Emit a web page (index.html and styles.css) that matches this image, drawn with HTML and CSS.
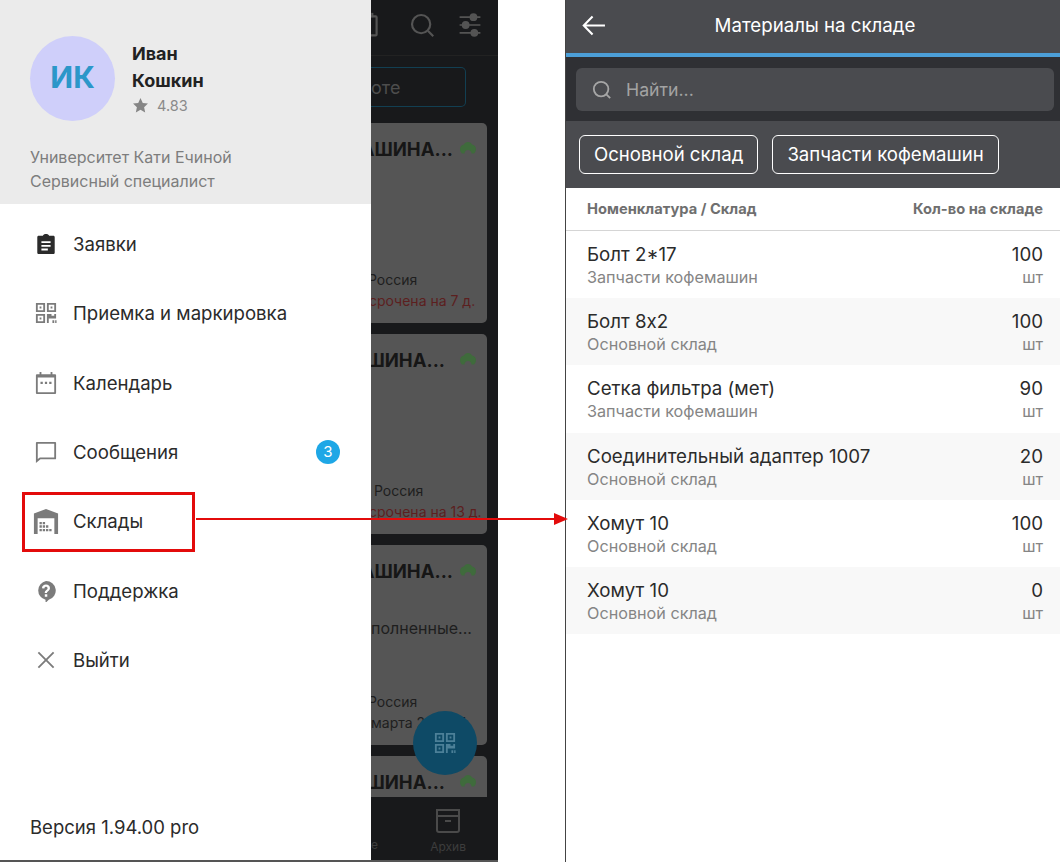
FILE: index.html
```html
<!DOCTYPE html>
<html lang="en">
<head>
    <meta charset="UTF-8">
    <title>Склады</title>
    <link rel="stylesheet" href="styles.css">
</head>
<body>
    <!-- Left phone: side menu over the orders list -->
    <div class="phone phone-menu">
        <div class="drawer">
            <div class="profile">
                <div class="profile-top">
                    <div class="avatar">ИК</div>
                    <div class="profile-info">
                        <div class="profile-name">Иван</div>
                        <div class="profile-name">Кошкин</div>
                        <div class="rating">
                            <svg class="star" viewBox="0 0 24 24"><path d="M12 1.500l3.200 7 7.300.8-5.400 5 1.500 7.500L12 18l-6.600 3.800 1.500-7.500-5.400-5 7.300-.8z"/></svg>
                            <span>4.83</span>
                        </div>
                    </div>
                </div>
                <div class="profile-org">Университет Кати Ечиной</div>
                <div class="profile-org">Сервисный специалист</div>
            </div>

            <div class="menu">
                <div class="menu-item">
                    <svg class="menu-icon dark" viewBox="0 0 24 24"><path fill-rule="evenodd" d="M4 3h4.600C9 1.700 10.300 1 12 1s3 .7 3.400 2H20c.8 0 1.500.7 1.500 1.500v17c0 .8-.7 1.500-1.500 1.500H4c-.8 0-1.500-.7-1.500-1.500v-17C2.500 3.700 3.200 3 4 3zm3 6v2h10V9zm0 4v2h10v-2zm0 4v2h7v-2z"/></svg>
                    <span>Заявки</span>
                </div>
                <div class="menu-item">
                    <svg class="menu-icon" viewBox="0 0 24 24"><path fill-rule="evenodd" d="M1 1h10v10H1zm2 2v6h6V3zm2 2h2v2H5zM13 1h10v10H13zm2 2v6h6V3zm2 2h2v2h-2zM1 13h10v10H1zm2 2v6h6v-6zm2 2h2v2H5zM13 13h5v2h3v-2h2v5h-8v5h-2zM19 20h2v3h-2zM22 20h1.500v3H22z"/></svg>
                    <span>Приемка и маркировка</span>
                </div>
                <div class="menu-item">
                    <svg class="menu-icon" viewBox="0 0 24 24"><path fill-rule="evenodd" d="M5 0h2v2.500h10V0h2v2.500h3c.6 0 1 .4 1 1V23c0 .6-.4 1-1 1H2c-.6 0-1-.4-1-1V3.500c0-.6.4-1 1-1h3zM3 6v16h18V6zm3 4.500h2.500V13H6zm4.800 0h2.400V13h-2.400zm4.700 0H18V13h-2.500z"/></svg>
                    <span>Календарь</span>
                </div>
                <div class="menu-item">
                    <svg class="menu-icon" viewBox="0 0 24 24"><path fill-rule="evenodd" d="M2 1h20c.6 0 1 .4 1 1v17c0 .6-.4 1-1 1H6l-5 4V2c0-.6.4-1 1-1zm1 2v16.500L5.300 18H21V3z"/></svg>
                    <span>Сообщения</span>
                    <span class="badge">3</span>
                </div>
                <div class="menu-item">
                    <svg class="menu-icon wide" viewBox="0 0 28 28"><path fill-rule="evenodd" d="M14 1l13 5v22h-4V11H5v17H1V6z"/><path d="M7 15h2.500v2.500H7zM10.500 15H13v2.500h-2.500zM7 18.700h2.500v2.500H7zM10.500 18.700H13v2.500h-2.500zM14 18.700h2.500v2.500H14zM7 22.500h2.500V25H7zM10.500 22.500H13V25h-2.500zM14 22.500h2.500V25H14zM17.500 22.500H20V25h-2.500z"/></svg>
                    <span>Склады</span>
                </div>
                <div class="menu-item">
                    <svg class="menu-icon" viewBox="0 0 24 24"><path fill-rule="evenodd" d="M12 1a10.500 10.500 0 0 1 3 20.600L11.500 25v-3.500A10.500 10.500 0 0 1 12 1zm-1.300 14.500v2.700h2.700v-2.700zM12 5c-2.400 0-4.200 1.500-4.400 3.900l2.600.3c.1-1.100.8-1.800 1.800-1.800s1.700.6 1.700 1.500c0 .8-.4 1.200-1.300 1.900-1.300 1-1.800 1.800-1.800 3.400h2.500c0-1 .3-1.300 1.200-2 1.300-1 2-1.900 2-3.400C16.300 6.400 14.500 5 12 5z"/></svg>
                    <span>Поддержка</span>
                </div>
                <div class="menu-item">
                    <svg class="menu-icon" viewBox="0 0 24 24"><path d="M4.400 3L12 10.600 19.600 3 21 4.400 13.400 12l7.600 7.600-1.400 1.400-7.600-7.600L4.400 21 3 19.600l7.600-7.600L3 4.400z"/></svg>
                    <span>Выйти</span>
                </div>
            </div>

            <div class="version">Версия 1.94.00 pro</div>
        </div>

        <!-- Dimmed screen behind the menu -->
        <div class="behind">
            <div class="behind-top">
                <svg class="behind-icon" viewBox="0 0 30 30" fill="none" stroke="#545454" stroke-width="2.500"><rect x="-8" y="5" width="26" height="22" rx="1"/><path d="M13 1v5"/><path d="M3 15h2.500M9 15h2.500" stroke-width="2.200"/></svg>
                <svg class="behind-icon" viewBox="0 0 30 30" fill="none" stroke="#545454" stroke-width="2.500"><circle cx="14" cy="14" r="10.500"/><path d="M22 22l6 6"/></svg>
                <svg class="behind-icon" viewBox="0 0 30 30" fill="none" stroke="#545454" stroke-width="2"><path d="M3 6h24M3 15h24M3 24h24"/><circle cx="19" cy="6" r="3.500" fill="#545454"/><circle cx="10" cy="15" r="3.500" fill="#545454"/><circle cx="20" cy="24" r="3.500" fill="#545454"/></svg>
            </div>
            <div class="behind-filter"><div class="filter-box">оте</div></div>
            <div class="cards">
                <div class="card">
                    <div class="card-title"><span class="title-text">АШИНА...</span><svg class="cloud" viewBox="0 0 16 12"><path fill-rule="evenodd" d="M8 0c2 0 3.500 1 4 2.500 2 .2 4 1.700 4 4.500 0 2-1 3.500-2 4.500h-2.500C11.300 9.500 10 8 8 8s-3.300 1.500-3.500 3.500H2c-1-1-2-2.500-2-4.500 0-2.800 2-4.300 4-4.500C4.500 1 6 0 8 0z"/></svg></div>
                    <div class="card-place">Россия</div>
                    <div class="card-late">срочена на 7 д.</div>
                </div>
                <div class="card">
                    <div class="card-title"><span class="title-text short">ШИНА...</span><svg class="cloud" viewBox="0 0 16 12"><path fill-rule="evenodd" d="M8 0c2 0 3.500 1 4 2.500 2 .2 4 1.700 4 4.500 0 2-1 3.500-2 4.500h-2.500C11.300 9.500 10 8 8 8s-3.300 1.500-3.500 3.500H2c-1-1-2-2.500-2-4.500 0-2.800 2-4.300 4-4.500C4.500 1 6 0 8 0z"/></svg></div>
                    <div class="card-place shifted">Россия</div>
                    <div class="card-late">срочена на 13 д.</div>
                </div>
                <div class="card">
                    <div class="card-title"><span class="title-text">АШИНА...</span><svg class="cloud" viewBox="0 0 16 12"><path fill-rule="evenodd" d="M8 0c2 0 3.500 1 4 2.500 2 .2 4 1.700 4 4.500 0 2-1 3.500-2 4.500h-2.500C11.300 9.500 10 8 8 8s-3.300 1.500-3.500 3.500H2c-1-1-2-2.500-2-4.500 0-2.800 2-4.300 4-4.500C4.500 1 6 0 8 0z"/></svg></div>
                    <div class="card-note">полненные...</div>
                    <div class="card-place next">Россия</div>
                    <div class="card-date">марта 2021 17</div>
                </div>
                <div class="card card-cut">
                    <div class="card-title"><span class="title-text short">ШИНА...</span><svg class="cloud" viewBox="0 0 16 12"><path fill-rule="evenodd" d="M8 0c2 0 3.500 1 4 2.500 2 .2 4 1.700 4 4.500 0 2-1 3.500-2 4.500h-2.500C11.300 9.500 10 8 8 8s-3.300 1.500-3.500 3.500H2c-1-1-2-2.500-2-4.500 0-2.800 2-4.300 4-4.500C4.500 1 6 0 8 0z"/></svg></div>
                </div>
            </div>
            <div class="behind-tabs">
                <span class="tab-cut">е</span>
                <div class="tab">
                    <svg class="tab-icon" viewBox="0 0 26 26" fill="none" stroke="#4a4a4a" stroke-width="2"><path d="M2 2h22v20c0 1-1 2-2 2H4c-1 0-2-1-2-2zM2 8h22M10 13h6"/></svg>
                    <span>Архив</span>
                </div>
            </div>
            <div class="fab">
                <svg class="fab-icon" viewBox="0 0 24 24"><path fill-rule="evenodd" d="M1 1h10v10H1zm2 2v6h6V3zm2 2h2v2H5zM13 1h10v10H13zm2 2v6h6V3zm2 2h2v2h-2zM1 13h10v10H1zm2 2v6h6v-6zm2 2h2v2H5zM13 13h5v2h3v-2h2v5h-8v5h-2zM19 20h2v3h-2zM22 20h1.500v3H22z"/></svg>
            </div>
        </div>
    </div>

    <!-- Right phone: stock list -->
    <div class="phone phone-stock">
        <div class="stock-head">
            <svg class="back" viewBox="0 0 24 22" fill="none" stroke="#fff" stroke-width="2.200"><path d="M24 11H2M11 1.500L1.800 11l9.200 9.500"/></svg>
            <div class="stock-title">Материалы на складе</div>
        </div>
        <div class="search-wrap">
            <div class="search">
                <svg class="search-icon" viewBox="0 0 22 22" fill="none" stroke="#a6a6a6" stroke-width="2"><circle cx="10" cy="10" r="8"/><path d="M15.500 15.500l4.500 4.500"/></svg>
                <span>Найти...</span>
            </div>
        </div>
        <div class="chips">
            <div class="chip">Основной склад</div>
            <div class="chip">Запчасти кофемашин</div>
        </div>
        <div class="table-head">
            <span>Номенклатура / Склад</span>
            <span>Кол-во на складе</span>
        </div>
        <div class="row">
            <div><div class="row-name">Болт 2*17</div><div class="row-sub">Запчасти кофемашин</div></div>
            <div class="row-qty"><div class="row-name">100</div><div class="row-sub">шт</div></div>
        </div>
        <div class="row">
            <div><div class="row-name">Болт 8х2</div><div class="row-sub">Основной склад</div></div>
            <div class="row-qty"><div class="row-name">100</div><div class="row-sub">шт</div></div>
        </div>
        <div class="row">
            <div><div class="row-name">Сетка фильтра (мет)</div><div class="row-sub">Запчасти кофемашин</div></div>
            <div class="row-qty"><div class="row-name">90</div><div class="row-sub">шт</div></div>
        </div>
        <div class="row">
            <div><div class="row-name">Соединительный адаптер 1007</div><div class="row-sub">Основной склад</div></div>
            <div class="row-qty"><div class="row-name">20</div><div class="row-sub">шт</div></div>
        </div>
        <div class="row">
            <div><div class="row-name">Хомут 10</div><div class="row-sub">Основной склад</div></div>
            <div class="row-qty"><div class="row-name">100</div><div class="row-sub">шт</div></div>
        </div>
        <div class="row">
            <div><div class="row-name">Хомут 10</div><div class="row-sub">Основной склад</div></div>
            <div class="row-qty"><div class="row-name">0</div><div class="row-sub">шт</div></div>
        </div>
    </div>

    <!-- Red callout on top of both phones -->
    <div class="callout-box"></div>
    <svg class="callout-arrow" viewBox="0 0 372 12"><path d="M0 5h358v-5l14 6-14 6v-5H0z" fill="#e30b0b"/></svg>
</body>
</html>
```

FILE: styles.css
```css
body {
    margin: 0;
    width: 1060px;
    height: 862px;
    overflow: hidden;
    display: flex;
    justify-content: space-between;
    position: relative;
    background-color: white;
    font-family: Inter, "Open Sans", Arial, sans-serif;
    color: #2b2b2b;
}

.phone {
    height: 862px;
    box-sizing: border-box;
}

/* Left phone */
.phone-menu {
    width: 498px;
    display: flex;
    border-bottom: 2px solid #555;
}

.drawer {
    width: 371px;
    flex-shrink: 0;
    display: flex;
    flex-direction: column;
    background-color: white;
}

.profile {
    height: 204px;
    box-sizing: border-box;
    padding: 36px 30px 0;
    background-color: #ebebeb;
}
.profile-top {
    display: flex;
    gap: 17px;
    margin-bottom: 24px;
}
.avatar {
    width: 85px;
    height: 85px;
    border-radius: 50%;
    background-color: #cfcffa;
    color: #2c97c9;
    font-size: 30px;
    font-weight: 700;
    line-height: 83px;
    text-align: center;
}
.profile-info {
    padding-top: 4px;
}
.profile-name {
    font-size: 18px;
    font-weight: 700;
    line-height: 27px;
    color: #222;
}
.rating {
    display: flex;
    align-items: center;
    gap: 8px;
    font-size: 14.500px;
    line-height: 23px;
    color: #8a8a8a;
}
.star {
    width: 17px;
    height: 17px;
    fill: #858585;
}
.profile-org {
    font-size: 16px;
    line-height: 24px;
    color: #7d7d7d;
}

.menu {
    padding-top: 5.500px;
}
.menu-item {
    height: 69.330px;
    display: flex;
    align-items: center;
    padding: 0 31px 0 35px;
    font-size: 18.600px;
}
.menu-icon {
    width: 22px;
    height: 22px;
    margin-right: 16px;
    fill: #7b7b7b;
    flex-shrink: 0;
}
.menu-icon.dark {
    fill: #2b2b2b;
}
.menu-icon.wide {
    width: 26px;
    height: 28px;
    margin-left: -2px;
    margin-right: 14px;
}
.badge {
    margin-left: auto;
    width: 24px;
    height: 24px;
    border-radius: 50%;
    background-color: #1ea7e6;
    color: white;
    font-size: 15px;
    line-height: 24px;
    text-align: center;
}

.version {
    margin-top: auto;
    padding: 0 30px 21px;
    font-size: 18.500px;
    line-height: 24px;
}

/* Dimmed screen */
.behind {
    flex: 1;
    min-width: 0;
    position: relative;
    display: flex;
    flex-direction: column;
    overflow: hidden;
    background-color: #18191b;
    white-space: nowrap;
}
.behind-top {
    height: 56px;
    flex-shrink: 0;
    box-sizing: border-box;
    display: flex;
    align-items: center;
    gap: 22px;
    padding: 0 15px 5px 0;
    justify-content: flex-end;
    border-bottom: 1px solid #222;
}
.behind-icon {
    width: 26px;
    height: 26px;
    flex-shrink: 0;
}
.behind-filter {
    height: 67px;
    flex-shrink: 0;
    box-sizing: border-box;
    padding: 11px 32px 0 0;
}
.filter-box {
    height: 40px;
    box-sizing: border-box;
    border: 1px solid #123f52;
    border-left: none;
    border-radius: 0 5px 5px 0;
    color: #4d4d4d;
    font-size: 18px;
    line-height: 40px;
}
.cards {
    flex: 1;
    min-height: 0;
    display: flex;
    flex-direction: column;
    gap: 11px;
    overflow: hidden;
    padding-right: 11px;
}
.card {
    height: 200px;
    flex-shrink: 0;
    box-sizing: border-box;
    padding: 13px 0 0;
    background-color: #555;
    border-radius: 0 5px 5px 0;
    color: #161616;
    position: relative;
}
.card-title {
    display: flex;
    justify-content: flex-end;
    align-items: center;
    gap: 7px;
    padding-right: 11px;
    font-size: 18.500px;
    font-weight: 700;
    line-height: 26px;
}
.title-text {
    flex-shrink: 0;
}
.title-text.short {
    margin-right: 8px;
}
.cloud {
    width: 16px;
    height: 12px;
    fill: #3f6b3c;
    flex-shrink: 0;
    margin-top: -2px;
}
.card-place {
    margin-top: 108px;
    margin-left: -3px;
    font-size: 14px;
    line-height: 20px;
    color: #1e1e1e;
}
.card-place.shifted {
    margin-left: 3px;
}
.card-late {
    font-size: 14px;
    line-height: 22px;
    color: #5c1f1f;
    margin-left: -2px;
}
.card-note {
    margin-top: 34px;
    font-size: 16px;
    line-height: 20px;
    color: #1e1e1e;
}
.card-place.next {
    margin-top: 54px;
}
.card-date {
    font-size: 14px;
    line-height: 22px;
    color: #1e1e1e;
}
.behind-tabs {
    height: 63px;
    flex-shrink: 0;
    display: flex;
    justify-content: space-between;
    color: #3d3d3d;
    font-size: 12px;
    padding-right: 32px;
}
.tab-cut {
    padding-top: 40px;
}
.tab {
    display: flex;
    flex-direction: column;
    align-items: center;
    gap: 5px;
    padding-top: 11px;
}
.tab-icon {
    width: 26px;
    height: 26px;
}
.fab {
    position: absolute;
    left: 42px;
    top: 711px;
    width: 64px;
    height: 64px;
    border-radius: 50%;
    background-color: #0e4a66;
    display: flex;
    align-items: center;
    justify-content: center;
}
.fab-icon {
    width: 22px;
    height: 22px;
    fill: #4c8098;
}

/* Right phone */
.phone-stock {
    width: 495px;
    border-left: 1px solid #444;
    display: flex;
    flex-direction: column;
}
.stock-head {
    height: 57px;
    box-sizing: border-box;
    position: relative;
    display: flex;
    align-items: center;
    justify-content: center;
    background-color: #4a4b4f;
    border-bottom: 4px solid #4c9fd8;
    color: white;
    font-size: 18.700px;
    padding-bottom: 3px;
}
.stock-title {
    margin-left: 4px;
}
.back {
    position: absolute;
    left: 16px;
    top: 15px;
    width: 23px;
    height: 21px;
}
.search-wrap {
    height: 64px;
    box-sizing: border-box;
    padding: 11px 6px 10px 10px;
    background-color: #2f3034;
}
.search {
    height: 100%;
    display: flex;
    align-items: center;
    gap: 14px;
    padding-left: 16px;
    background-color: #4a4b4f;
    border-radius: 6px;
    color: #a3a3a3;
    font-size: 17.700px;
}
.search-icon {
    width: 20px;
    height: 20px;
}
.chips {
    height: 67px;
    box-sizing: border-box;
    display: flex;
    gap: 14px;
    padding: 14px 0 0 13px;
    background-color: #4a4b4f;
}
.chip {
    height: 39px;
    box-sizing: border-box;
    padding: 0 14px;
    border: 1px solid white;
    border-radius: 6px;
    color: white;
    font-size: 18.600px;
    line-height: 37px;
}
.table-head {
    height: 43px;
    box-sizing: border-box;
    display: flex;
    justify-content: space-between;
    padding: 11px 17px 0 21px;
    border-bottom: 1px solid #d5d5d5;
    color: #6f6f6f;
    font-size: 14.700px;
    font-weight: 700;
    line-height: 20px;
}
.row {
    height: 67.200px;
    box-sizing: border-box;
    display: flex;
    justify-content: space-between;
    padding: 12px 17px 0 21px;
}
.row:nth-child(even) {
    background-color: #f8f8f8;
}
.row-qty {
    text-align: right;
}
.row-name {
    font-size: 18.700px;
    line-height: 23px;
    color: #2b2b2b;
}
.row-sub {
    font-size: 16.200px;
    line-height: 22px;
    color: #858585;
}

/* Red callout */
.callout-box {
    position: absolute;
    left: 22px;
    top: 492px;
    width: 173px;
    height: 60px;
    box-sizing: border-box;
    border: 3px solid #e30b0b;
}
.callout-arrow {
    position: absolute;
    left: 196px;
    top: 513px;
    width: 372px;
    height: 12px;
}
```
